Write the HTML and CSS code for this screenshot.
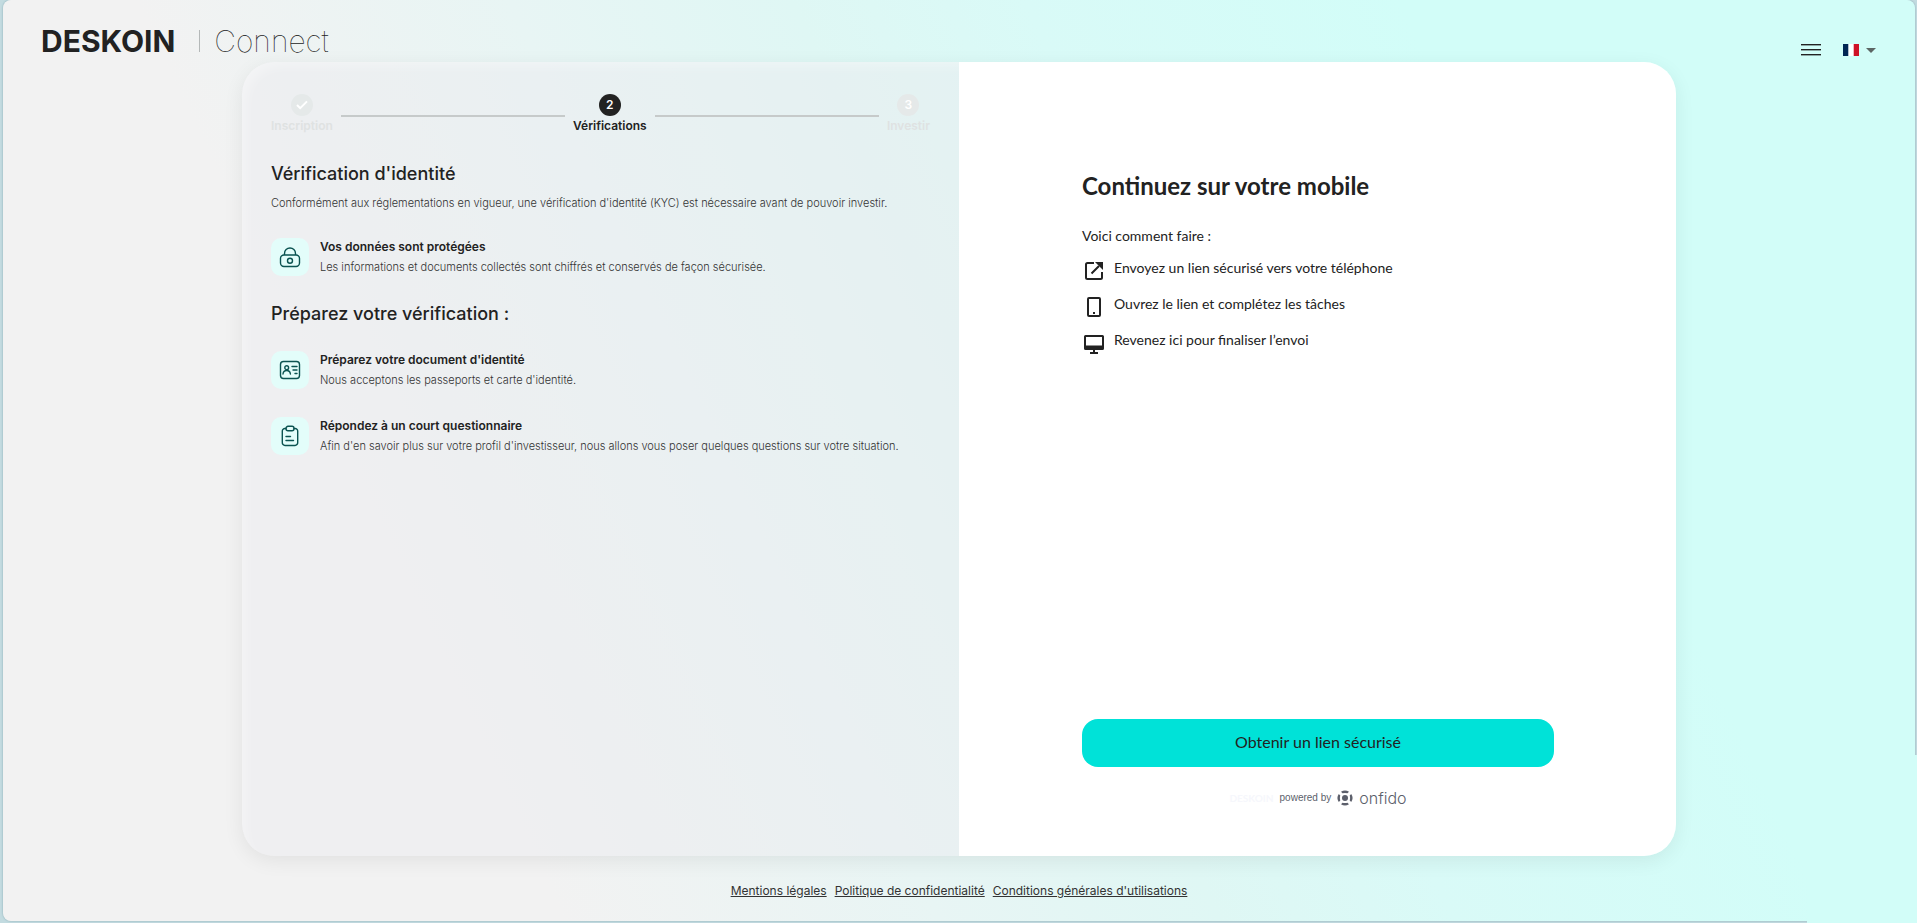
FILE: index.html
```
<!DOCTYPE html>
<html lang="fr">
<head>
    <meta charset="UTF-8">
    <meta name="viewport" content="width=device-width, initial-scale=1">
    <title>Deskoin Connect</title>
    <link rel="stylesheet" href="styles.css">
</head>
<body>

<div class="page">

    <!-- top bar: logo, menu, language -->
    <header class="header">
        <a class="logo" href="#">
            <span class="logo-name">DESKOIN</span>
            <span class="logo-product">Connect</span>
        </a>
        <div class="header-actions">
            <button class="icon-button" type="button" aria-label="Menu">
                <svg width="20" height="12" viewBox="0 0 20 12" fill="#222"><path d="M0 0h20v1H0zM0 5h20v1H0zM0 10h20v1H0z"/><path opacity=".4" d="M0 1h20v1H0zM0 6h20v1H0zM0 11h20v1H0z"/></svg>
            </button>
            <button class="icon-button language" type="button" aria-label="Langue : français">
                <svg width="16" height="12" viewBox="0 0 16 12"><path fill="#fff" d="M0 0h16v12H0z"/><path fill="#002654" d="M0 0h5.300v12H0z"/><path fill="#ce1126" d="M10.700 0H16v12h-5.300z"/></svg>
                <svg width="10" height="5" viewBox="0 0 10 5"><path fill="#5c6664" d="M0 0h10L5 5z"/></svg>
            </button>
        </div>
    </header>

    <main class="card">
        <section class="info">
            <ol class="steps">
                <li class="step">
                    <span class="step-badge">
                        <svg width="12" height="10" viewBox="0 0 12 10" fill="none" stroke="#fff" stroke-width="2"><path d="M1 5l3.2 3.2L11 1.4"/></svg>
                    </span>
                    <span class="step-label">Inscription</span>
                </li>
                <li class="step-line" aria-hidden="true"></li>
                <li class="step active" aria-current="step">
                    <span class="step-badge">2</span>
                    <span class="step-label">Vérifications</span>
                </li>
                <li class="step-line" aria-hidden="true"></li>
                <li class="step">
                    <span class="step-badge">3</span>
                    <span class="step-label">Investir</span>
                </li>
            </ol>

            <h1 class="title">Vérification d'identité</h1>
            <p class="intro">Conformément aux réglementations en vigueur, une vérification d'identité (KYC) est nécessaire avant de pouvoir investir.</p>

            <div class="item">
                <span class="item-icon">
                    <svg width="22" height="22" viewBox="0 0 22 22" fill="none" stroke="#0b5351" stroke-width="1.4"><rect x="1.5" y="9" width="19" height="11.5" rx="3.5"/><path d="M5.5 9V7.500a5.500 5.500 0 0 1 11 0V9"/><circle cx="11" cy="14.700" r="2.500"/></svg>
                </span>
                <div>
                    <h3 class="item-title">Vos données sont protégées</h3>
                    <p class="item-text">Les informations et documents collectés sont chiffrés et conservés de façon sécurisée.</p>
                </div>
            </div>

            <h2 class="title">Préparez votre vérification :</h2>

            <div class="item">
                <span class="item-icon">
                    <svg width="22" height="22" viewBox="0 0 22 22" fill="none" stroke="#0b5351" stroke-width="1.4" stroke-linecap="round"><rect x="1.500" y="2.500" width="19" height="17" rx="3"/><circle cx="7.700" cy="8.700" r="1.900"/><path d="M4 15c.3-2.600 1.800-3.500 3.700-3.500s3.400.9 3.700 3.500M13 7.500h5M14 11h4M16 14.500h2"/></svg>
                </span>
                <div>
                    <h3 class="item-title">Préparez votre document d'identité</h3>
                    <p class="item-text">Nous acceptons les passeports et carte d'identité.</p>
                </div>
            </div>

            <div class="item">
                <span class="item-icon">
                    <svg width="22" height="22" viewBox="0 0 22 22" fill="none" stroke="#0b5351" stroke-width="1.400" stroke-linecap="round"><path d="M7 3.500H6A2.500 2.500 0 0 0 3.300 6v11.500A2.800 2.800 0 0 0 6 20.500h10a2.800 2.800 0 0 0 2.700-3V6A2.500 2.500 0 0 0 16 3.500h-1"/><rect x="7" y="1.300" width="8" height="4.500" rx="2"/><path d="M7 11.500h4.500M7 15.500h7.500"/></svg>
                </span>
                <div>
                    <h3 class="item-title">Répondez à un court questionnaire</h3>
                    <p class="item-text">Afin d'en savoir plus sur votre profil d'investisseur, nous allons vous poser quelques questions sur votre situation.</p>
                </div>
            </div>
        </section>

        <section class="mobile">
            <h2 class="mobile-title">Continuez sur votre mobile</h2>
            <p class="mobile-intro">Voici comment faire :</p>
            <ul class="todo">
                <li>
                    <svg width="24" height="24" viewBox="0 0 24 24" fill="none" stroke="#222" stroke-width="2"><path d="M12 4H5.500Q4 4 4 5.500v13Q4 20 5.500 20h13q1.500 0 1.500-1.500V13M9.500 14.500L17 7"/><path fill="#222" stroke="none" d="M13 3h8v8z"/></svg>
                    <span>Envoyez un lien sécurisé vers votre téléphone</span>
                </li>
                <li>
                    <svg width="24" height="24" viewBox="0 0 24 24" fill="none" stroke="#222" stroke-width="2"><rect x="6" y="3" width="12" height="18" rx="1"/><path fill="#222" stroke="none" d="M11 17h2v2h-2z"/></svg>
                    <span>Ouvrez le lien et complétez les tâches</span>
                </li>
                <li>
                    <svg width="24" height="24" viewBox="0 0 24 24"><path fill="#222" fill-rule="evenodd" d="M3.500 4h17Q22 4 22 5.500v12q0 1.500-1.500 1.500H13v2h3v2H8v-2h3v-2H3.500Q2 19 2 17.500v-12Q2 4 3.500 4zM4 6v8.500h16V6z"/></svg>
                    <span>Revenez ici pour finaliser l’envoi</span>
                </li>
            </ul>
            <button class="submit" type="button">Obtenir un lien sécurisé</button>
            <div class="powered">
                <span class="powered-client">DESKOIN</span>
                <span class="powered-by">powered by</span>
                <svg width="16" height="16" viewBox="0 0 16 16" fill="#5c5f6b"><circle cx="8" cy="8" r="3"/><path d="M4 1.800Q8-1 12 1.800L10.500 3.300Q8 2.500 5.500 3.300zM4 14.200Q8 17 12 14.200L10.500 12.700Q8 13.500 5.500 12.700zM1.800 4Q-1 8 1.800 12L3.300 10.500Q2.500 8 3.300 5.500zM14.200 4Q17 8 14.200 12L12.700 10.500Q13.500 8 12.700 5.500z"/></svg>
                <span class="powered-brand">onfido</span>
            </div>
        </section>
    </main>

    <footer class="footer">
        <a href="#">Mentions légales</a>
        <a href="#">Politique de confidentialité</a>
        <a href="#">Conditions générales d'utilisations</a>
    </footer>

</div>

</body>
</html>
```
FILE: styles.css
```
* {
    box-sizing: border-box;
}

body {
    margin: 0;
    padding: 0 2px 2px 3px;
    min-height: 100vh;
    display: flex;
    background: #c3dbe0;
    color: #222;
    font-family: Inter, "Open Sans", sans-serif;
    font-size: 12px;
    line-height: 20px;
}

h1, h2, h3, p, ol, ul {
    margin: 0;
    padding: 0;
    list-style: none;
}

svg {
    flex: none;
    display: block;
}

/* the frame fades out in the bottom right corner */
body::after {
    content: "";
    position: absolute;
    right: 0;
    bottom: 0;
    width: 110px;
    height: 168px;
    background: #d2fdf8;
}

.page {
    flex: 1;
    display: flex;
    flex-direction: column;
    border-radius: 8px;
    box-shadow: 0 0 2px #7fa3ab;
    background: linear-gradient(65deg, #f2f2f2 24%, #e8f5f4 40%, #dff7f4 52%, #d9faf7 62%, #d2fdf8 78%);
}

.header {
    display: flex;
    justify-content: space-between;
    height: 62px;
    padding: 0 39px 0 38px;
}

.logo {
    display: flex;
    align-items: center;
    align-self: flex-start;
    margin-top: 26px;
    color: #222;
    text-decoration: none;
    font-size: 30px;
    line-height: 30px;
}

.logo-name {
    font-weight: 700;
}

.logo-product {
    display: flex;
    align-items: center;
    font-weight: 100;
}

.logo-product::before {
    content: "";
    width: 1px;
    height: 22px;
    margin: 0 14px 0 24px;
    background: #b4b8b8;
}

.header-actions {
    display: flex;
    align-items: center;
    gap: 22px;
    padding-top: 38px;
}

.icon-button {
    display: flex;
    align-items: center;
    gap: 7px;
    padding: 0;
    border: 0;
    background: none;
    cursor: pointer;
}

.card {
    flex: 1;
    display: grid;
    grid-template-columns: 1fr 1fr;
    width: 75%;
    min-height: 640px;
    margin: 0 auto;
    border-radius: 32px;
    overflow: hidden;
    box-shadow: 0 5px 20px rgba(0, 0, 0, 0.07);
}

.info {
    padding: 32px 29px;
    border-radius: 32px 0 0 32px;
    background: rgba(236, 236, 240, 0.5);
    box-shadow: inset 8px 8px 12px -4px rgba(255, 255, 255, 0.35);
}

.steps {
    display: flex;
    gap: 8px;
    margin-bottom: 24px;
}

.step {
    display: flex;
    flex-direction: column;
    align-items: center;
    color: #dfe2e2;
    font-weight: 600;
}

.step-badge {
    display: flex;
    align-items: center;
    justify-content: center;
    width: 22px;
    height: 22px;
    border-radius: 50%;
    background: #e5e9e9;
    color: #fff;
}

.step.active {
    color: #222;
}

.step.active .step-badge {
    background: #222;
}

.step-line {
    flex: 1;
    height: 2px;
    margin-top: 21px;
    background: #c6caca;
}

.title {
    font-size: 18px;
    font-weight: 500;
    line-height: 28px;
}

.intro,
.item-text {
    color: #333;
    font-size: 11px;
    font-weight: 300;
}

.intro {
    margin: 5px 0 24px;
}

.item {
    display: flex;
    align-items: center;
    gap: 11px;
    margin: 22px 0 26px;
}

.item + .title {
    margin-top: -3px;
}

.item-icon {
    flex: none;
    display: flex;
    align-items: center;
    justify-content: center;
    width: 38px;
    height: 38px;
    border-radius: 10px;
    background: #e3fdfa;
}

.item-title {
    font-size: 12px;
    font-weight: 600;
    line-height: 20px;
}

.mobile {
    display: flex;
    flex-direction: column;
    padding: 108px 122px 48px 123px;
    background: #fff;
    font-family: Lato, sans-serif;
    font-size: 14px;
}

.mobile-title {
    margin-bottom: 24px;
    font-size: 24px;
    font-weight: 700;
    line-height: 32px;
}

.mobile-intro {
    margin-bottom: 12px;
}

.todo li {
    display: flex;
    gap: 8px;
    height: 36px;
}

.todo svg {
    margin-top: 1px;
}

.submit {
    height: 48px;
    margin-top: auto;
    padding: 0 16px 4px;
    border: 0;
    border-radius: 16px;
    background: #00e2d8;
    color: #222;
    font-family: inherit;
    font-size: 16px;
    cursor: pointer;
}

.powered {
    display: flex;
    align-items: center;
    justify-content: center;
    gap: 6px;
    margin-top: 21px;
    color: #5c5f6b;
    font-size: 10px;
}

.powered-client {
    color: #f6f7fc;
    font-weight: 700;
}

.powered-by {
    font-family: "Liberation Sans", sans-serif;
}

.powered-brand {
    font-family: Inter, sans-serif;
    font-size: 16px;
    font-weight: 300;
}

.footer {
    display: flex;
    justify-content: center;
    gap: 8px;
    padding: 25px 0 20px;
}

.footer a {
    color: #333;
}
```
